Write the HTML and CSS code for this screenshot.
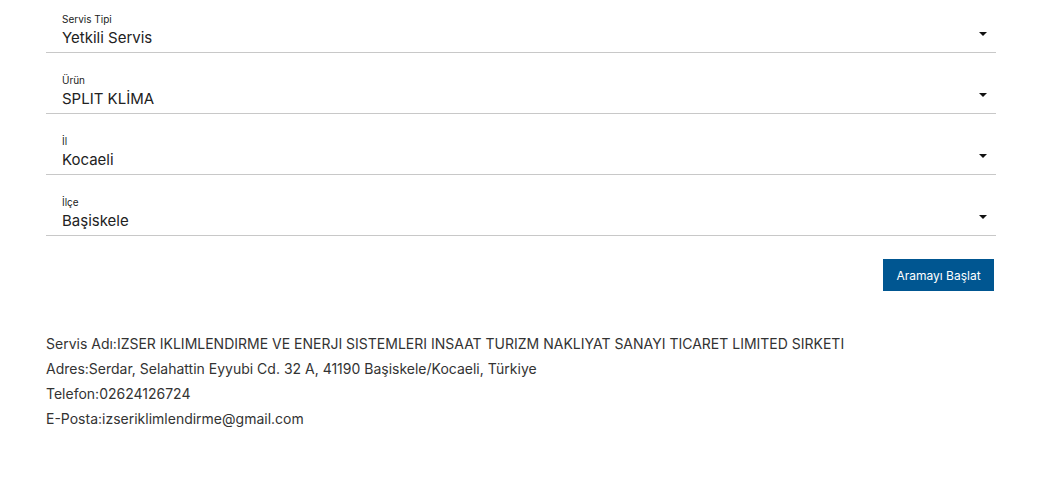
FILE: index.html
```html
<!DOCTYPE html>
<html lang="tr">
<head>
<meta charset="utf-8">
<link rel="stylesheet" href="styles.css">
</head>
<body>
<div class="page">
  <form class="form">
    <div class="field">
      <div class="field-text">
        <span class="label">Servis Tipi</span>
        <span class="value">Yetkili Servis</span>
      </div>
      <span class="caret"></span>
    </div>
    <div class="field">
      <div class="field-text">
        <span class="label">Ürün</span>
        <span class="value">SPLIT KLİMA</span>
      </div>
      <span class="caret"></span>
    </div>
    <div class="field">
      <div class="field-text">
        <span class="label">İl</span>
        <span class="value">Kocaeli</span>
      </div>
      <span class="caret"></span>
    </div>
    <div class="field">
      <div class="field-text">
        <span class="label">İlçe</span>
        <span class="value">Başiskele</span>
      </div>
      <span class="caret"></span>
    </div>
    <div class="actions">
      <button type="button" class="btn">Aramayı Başlat</button>
    </div>
  </form>
  <div class="result">
    <p>Servis Adı:IZSER IKLIMLENDIRME VE ENERJI SISTEMLERI INSAAT TURIZM NAKLIYAT SANAYI TICARET LIMITED SIRKETI</p>
    <p>Adres:Serdar, Selahattin Eyyubi Cd. 32 A, 41190 Başiskele/Kocaeli, Türkiye</p>
    <p>Telefon:02624126724</p>
    <p>E-Posta:izseriklimlendirme@gmail.com</p>
  </div>
</div>
</body>
</html>
```
FILE: styles.css
```css
html, body {
  margin: 0;
  padding: 0;
  background: #fff;
}
body {
  font-family: Inter, "Open Sans", "Liberation Sans", sans-serif;
  color: #222;
}
.page {
  width: 950px;
  padding: 1px 45px 0 46px;
}
.form {
  display: flex;
  flex-direction: column;
}
.field {
  display: flex;
  align-items: flex-start;
  height: 52px;
  margin-top: 9px;
  border-bottom: 1px solid #c8c8c8;
  padding-left: 16px;
  padding-right: 9px;
  box-sizing: border-box;
}
.field:first-child {
  margin-top: 0;
}
.field-text {
  flex: 1;
  display: flex;
  flex-direction: column;
  padding-top: 11px;
}
.label {
  font-size: 10px;
  line-height: 15px;
  color: #222;
}
.value {
  font-size: 15px;
  line-height: 22px;
  color: #222;
}
.caret {
  width: 0;
  height: 0;
  border-left: 4px solid transparent;
  border-right: 4px solid transparent;
  border-top: 4px solid #111;
  align-self: flex-end;
  margin-bottom: 16px;
}
.actions {
  display: flex;
  justify-content: flex-end;
  padding: 23px 2px 0 0;
}
.btn {
  background: #005691;
  color: #fff;
  border: none;
  font-family: Inter, "Open Sans", "Liberation Sans", sans-serif;
  font-size: 12px;
  width: 111px;
  height: 32px;
  padding: 0;
}
.result {
  padding-top: 40px;
  font-size: 14px;
  color: #333;
}
.result p {
  margin: 0;
  line-height: 25px;
}
```
